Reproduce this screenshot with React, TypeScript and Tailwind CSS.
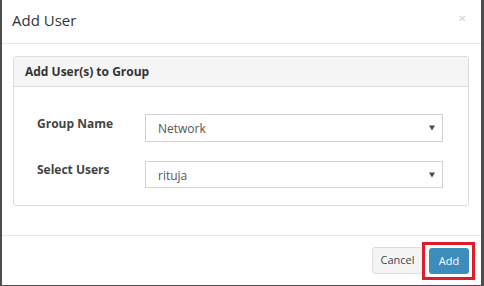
import React from "react";

function Arrow() {
  return (
    <svg width="6" height="6" viewBox="0 0 6 6" className="shrink-0">
      <path d="M0 0.5 H6 L3 5.5 Z" fill="#4a4a4a" />
    </svg>
  );
}

function FakeSelect({ value, h }: { value: string; h: string }) {
  return (
    <div className={`flex items-center justify-between w-[298px] ${h} border border-[#d2d2d2] bg-white pl-[12px] pr-[7px]`}>
      <span className="text-[12px] leading-[16px] text-[#555] pt-[2px]">{value}</span>
      <Arrow />
    </div>
  );
}

export default function App() {
  return (
    <div
      className="w-[484px] h-[286px] bg-white border-l-2 border-r-[3px] border-b border-[#4d4d4d] flex flex-col text-[#333]"
      style={{ fontFamily: '"Open Sans", "Noto Sans", sans-serif' }}
    >
      <div className="h-[44px] border-b border-[#e9e9e9] flex items-start justify-between pl-[10px] pr-[15px] pt-[10px] shrink-0">
        <span className="text-[15px] leading-[20px] text-[#333]">Add User</span>
        <span className="text-[13px] leading-[14px] text-[#c8c8c8] mt-[1px]">×</span>
      </div>
      <div className="pt-[12px] pl-[11px] pr-[12px] h-[191px] shrink-0">
        <div className="border border-[#dcdcdc] rounded-[3px] h-[150px] flex flex-col">
          <div className="h-[30px] bg-[#f5f5f5] border-b border-[#dcdcdc] flex items-center pl-[11px] shrink-0 rounded-t-[3px]">
            <span className="text-[12px] font-bold text-[#333]">Add User(s) to Group</span>
          </div>
          <div className="flex flex-col pl-[23px] pr-[25px] pt-[27px] gap-[19px]">
            <div className="flex items-start">
              <span className="w-[108px] text-[12px] font-bold text-[#444] pt-[1px]">Group Name</span>
              <FakeSelect value="Network" h="h-[28px]" />
            </div>
            <div className="flex items-start">
              <span className="w-[108px] text-[12px] font-bold text-[#444] pt-[0px]">Select Users</span>
              <FakeSelect value="rituja" h="h-[27px]" />
            </div>
          </div>
        </div>
      </div>
      <div className="border-t border-[#e9e9e9] flex-1 flex justify-end items-start pt-[11px] pr-[12px] gap-[6px]">
        <button className="w-[51px] h-[27px] bg-[#f4f4f4] border border-[#dcdcdc] rounded-[3px] text-[11px] text-[#444]">
          Cancel
        </button>
        <div className="relative">
          <button className="w-[40px] h-[26px] bg-[#3c8dbc] rounded-[3px] text-[11px] text-white">
            Add
          </button>
          <div className="absolute left-[-7px] top-[-5px] w-[53px] h-[38px] border-[3px] border-[#dd1d2b]" />
        </div>
      </div>
    </div>
  );
}
